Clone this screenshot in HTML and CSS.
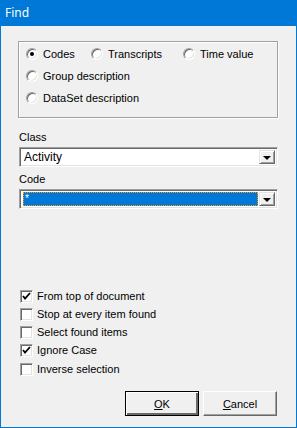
FILE: index.html
```html
<!DOCTYPE html>
<html lang="en">
<head>
    <meta charset="UTF-8">
    <title>Find</title>
    <link rel="stylesheet" href="styles.css">
</head>
<body>

    <div class="window">
        <div class="titlebar">Find</div>

        <div class="content">
            <div class="group">
                <div class="radio-row">
                    <label class="radio col1"><span class="dot checked"></span>Codes</label>
                    <label class="radio col2"><span class="dot"></span>Transcripts</label>
                    <label class="radio"><span class="dot"></span>Time value</label>
                </div>
                <div class="radio-row">
                    <label class="radio"><span class="dot"></span>Group description</label>
                </div>
                <div class="radio-row">
                    <label class="radio"><span class="dot"></span>DataSet description</label>
                </div>
            </div>

            <div class="field-label">Class</div>
            <div class="combo">
                <div class="combo-text">Activity</div>
                <div class="combo-btn"><span class="arrow"></span></div>
            </div>

            <div class="field-label">Code</div>
            <div class="combo">
                <div class="combo-text"><span class="selected">*</span></div>
                <div class="combo-btn"><span class="arrow"></span></div>
            </div>

            <div class="checks">
                <label class="check"><span class="box checked"><svg width="9" height="9" viewBox="0 0 9 9"><path d="M1 4 L3 6.5 L8 1" fill="none" stroke="#000" stroke-width="1.8"/></svg></span>From top of document</label>
                <label class="check"><span class="box"></span>Stop at every item found</label>
                <label class="check"><span class="box"></span>Select found items</label>
                <label class="check"><span class="box checked"><svg width="9" height="9" viewBox="0 0 9 9"><path d="M1 4 L3 6.5 L8 1" fill="none" stroke="#000" stroke-width="1.8"/></svg></span>Ignore Case</label>
                <label class="check last"><span class="box"></span>Inverse selection</label>
            </div>

            <div class="buttons">
                <button class="btn default"><u>O</u>K</button>
                <button class="btn"><u>C</u>ancel</button>
            </div>
        </div>
    </div>

</body>
</html>
```

FILE: styles.css
```css
/* classic dialog look */
body {
    margin: 0;
    padding: 0;
    font-family: "Liberation Sans", Arial, sans-serif;
    font-size: 11px;
    color: #000;
}

.window {
    width: 297px;
    height: 428px;
    box-sizing: border-box;
    border: 1px solid #0078d7;
    border-top: 0;
    background: #f0f0f0;
    display: flex;
    flex-direction: column;
}

.titlebar {
    height: 26px;
    line-height: 25px;
    margin: 0 -1px;
    padding-left: 5px;
    background: #0078d7;
    color: #fff;
    font-family: "Noto Sans", sans-serif;
    font-size: 12px;
}

.content {
    padding: 15px 18px 0 17px;
    display: flex;
    flex-direction: column;
}

.group {
    height: 74px;
    border: 1px solid #a0a0a0;
    box-shadow: 1px 1px 0 #fff, inset 1px 1px 0 #fff;
    padding: 1px 0 0 7px;
}

.radio-row {
    display: flex;
    height: 22px;
    align-items: center;
}

.radio {
    display: flex;
    align-items: center;
    gap: 5px;
}

.col1 {
    width: 65px;
}

.col2 {
    width: 92px;
}

.dot {
    width: 12px;
    height: 12px;
    box-sizing: border-box;
    border-radius: 50%;
    background: #fff;
    border: 1px solid;
    border-color: #a0a0a0 #fff #fff #a0a0a0;
    box-shadow: inset 1px 1px 0 #696969, inset -1px -1px 0 #e3e3e3;
    position: relative;
}

.dot.checked::after {
    content: "";
    position: absolute;
    left: 3px;
    top: 3px;
    width: 4px;
    height: 4px;
    border-radius: 50%;
    background: #000;
}

.field-label {
    margin-top: 12px;
    height: 14px;
    line-height: 14px;
    padding-left: 1px;
}

.field-label + .combo {
    margin-top: 3px;
}

.combo + .field-label {
    margin-top: 5px;
}

.combo {
    height: 20px;
    box-sizing: border-box;
    margin-left: 1px;
    border: 1px solid;
    border-color: #a0a0a0 #fff #fff #a0a0a0;
    box-shadow: inset 1px 1px 0 #696969, inset -1px -1px 0 #e3e3e3;
    background: #fff;
    display: flex;
    padding: 2px 2px 2px 2px;
}

.combo-text {
    flex: 1;
    display: flex;
    align-items: center;
    padding-left: 2px;
    font-size: 12px;
}

.selected {
    flex: 1;
    align-self: stretch;
    margin-left: -1px;
    margin-right: 1px;
    background: #0078d7;
    color: #fff;
    outline: 1px dotted #ff9800;
    outline-offset: -1px;
    padding-left: 2px;
    line-height: 14px;
    font-size: 10px;
}

.combo-btn {
    width: 16px;
    box-sizing: border-box;
    background: #f0f0f0;
    border: 1px solid;
    border-color: #e3e3e3 #696969 #696969 #e3e3e3;
    box-shadow: inset 1px 1px 0 #fff, inset -1px -1px 0 #a0a0a0;
    display: flex;
    align-items: center;
    justify-content: center;
}

.arrow {
    width: 0;
    height: 0;
    border-left: 4px solid transparent;
    border-right: 4px solid transparent;
    border-top: 4px solid #000;
    margin-top: 1px;
}

.checks {
    margin-top: 78px;
    display: flex;
    flex-direction: column;
    padding-left: 2px;
}

.check {
    display: flex;
    align-items: center;
    gap: 4px;
    height: 18px;
}

.check.last {
    margin-top: 1px;
}

.box {
    width: 13px;
    height: 13px;
    box-sizing: border-box;
    background: #fff;
    border: 1px solid;
    border-color: #a0a0a0 #fff #fff #a0a0a0;
    box-shadow: inset 1px 1px 0 #696969, inset -1px -1px 0 #e3e3e3;
    display: flex;
    align-items: center;
    justify-content: center;
}

.buttons {
    margin-top: 13px;
    display: flex;
    justify-content: flex-end;
    gap: 4px;
    padding-right: 1px;
}

.btn {
    width: 74px;
    height: 25px;
    box-sizing: border-box;
    font-family: "Liberation Sans", Arial, sans-serif;
    font-size: 11px;
    background: #f0f0f0;
    border: 1px solid;
    border-color: #fff #696969 #696969 #fff;
    box-shadow: inset -1px -1px 0 #a0a0a0;
    padding: 0;
}

.btn.default {
    border: 1px solid #000;
    box-shadow: inset 1px 1px 0 #fff, inset -2px -2px 0 #696969;
}
```
